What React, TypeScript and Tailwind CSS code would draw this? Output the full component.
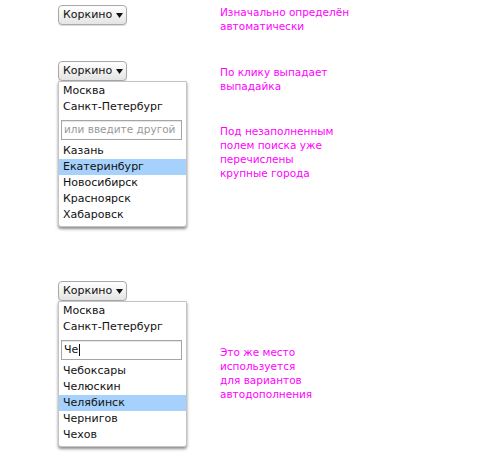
import React from "react";

const font = { fontFamily: '"DejaVu Sans", Verdana, sans-serif' };

function CityButton() {
  return (
    <div className="inline-flex h-[20px] w-[69px] items-center rounded-[4px] border border-[#a9a9a9] bg-gradient-to-b from-white to-[#e4e4e4] pl-[4px] text-[11px] text-[#111] shadow-[0_1px_1px_rgba(0,0,0,0.15)]">
      <span>Коркино</span>
      <svg className="ml-[4px]" width="7" height="5" viewBox="0 0 7 5">
        <path d="M0 0H7L3.5 5Z" fill="#111" />
      </svg>
    </div>
  );
}

function Row({ name, active }: { name: string; active?: boolean }) {
  return (
    <div className={"flex h-[16px] items-center pl-[4px] " + (active ? "bg-[#a6d1fc]" : "")}>
      {name}
    </div>
  );
}

function Dropdown({ query, cities, active }: { query?: string; cities: string[]; active: number }) {
  return (
    <div className="flex flex-col items-start">
      <CityButton />
      <div className="w-[129px] rounded-b-[3px] border border-[#c4c4c4] bg-white pt-[1px] pb-[3px] text-[11px] text-[#111] shadow-[0_2px_3px_rgba(0,0,0,0.45)]">
        <Row name="Москва" />
        <Row name="Санкт-Петербург" />
        <div className="mx-[2px] mt-[5px] mb-[3px] flex h-[20px] w-[121px] items-center overflow-hidden whitespace-nowrap border border-[#a5a5a5] pl-[2px] shadow-[inset_0_1px_1px_rgba(0,0,0,0.1)]">
          {query ? (
            <>
              <span>{query}</span>
              <span className="ml-[1px] h-[12px] w-[1px] bg-[#111]" />
            </>
          ) : (
            <span className="text-[10.5px] text-[#999]">или введите другой</span>
          )}
        </div>
        {cities.map((c, i) => (
          <Row key={c} name={c} active={i === active} />
        ))}
      </div>
    </div>
  );
}

function Note({ lines }: { lines: string[] }) {
  return (
    <div className="text-[10.5px] leading-[14px] text-[#ff00ff]">
      {lines.map((l) => (
        <div key={l}>{l}</div>
      ))}
    </div>
  );
}

export default function App() {
  return (
    <div className="h-[460px] w-[500px] bg-white pt-[1px]" style={font}>
      <div className="flex h-[60px]">
        <div className="w-[220px] pl-[58px]">
          <CityButton />
        </div>
        <div className="pt-[4px]">
          <Note lines={["Изначально определён", "автоматически"]} />
        </div>
      </div>

      <div className="flex h-[220px]">
        <div className="w-[220px] pl-[58px]">
          <Dropdown
            cities={["Казань", "Екатеринбург", "Новосибирск", "Красноярск", "Хабаровск"]}
            active={1}
          />
        </div>
        <div className="flex flex-col gap-[31px] pt-[4px]">
          <Note lines={["По клику выпадает", "выпадайка"]} />
          <Note lines={["Под незаполненным", "полем поиска уже", "перечислены", "крупные города"]} />
        </div>
      </div>

      <div className="flex">
        <div className="w-[220px] pl-[58px]">
          <Dropdown
            query="Че"
            cities={["Чебоксары", "Челюскин", "Челябинск", "Чернигов", "Чехов"]}
            active={2}
          />
        </div>
        <div className="pt-[64px]">
          <Note lines={["Это же место", "используется", "для вариантов", "автодополнения"]} />
        </div>
      </div>
    </div>
  );
}
